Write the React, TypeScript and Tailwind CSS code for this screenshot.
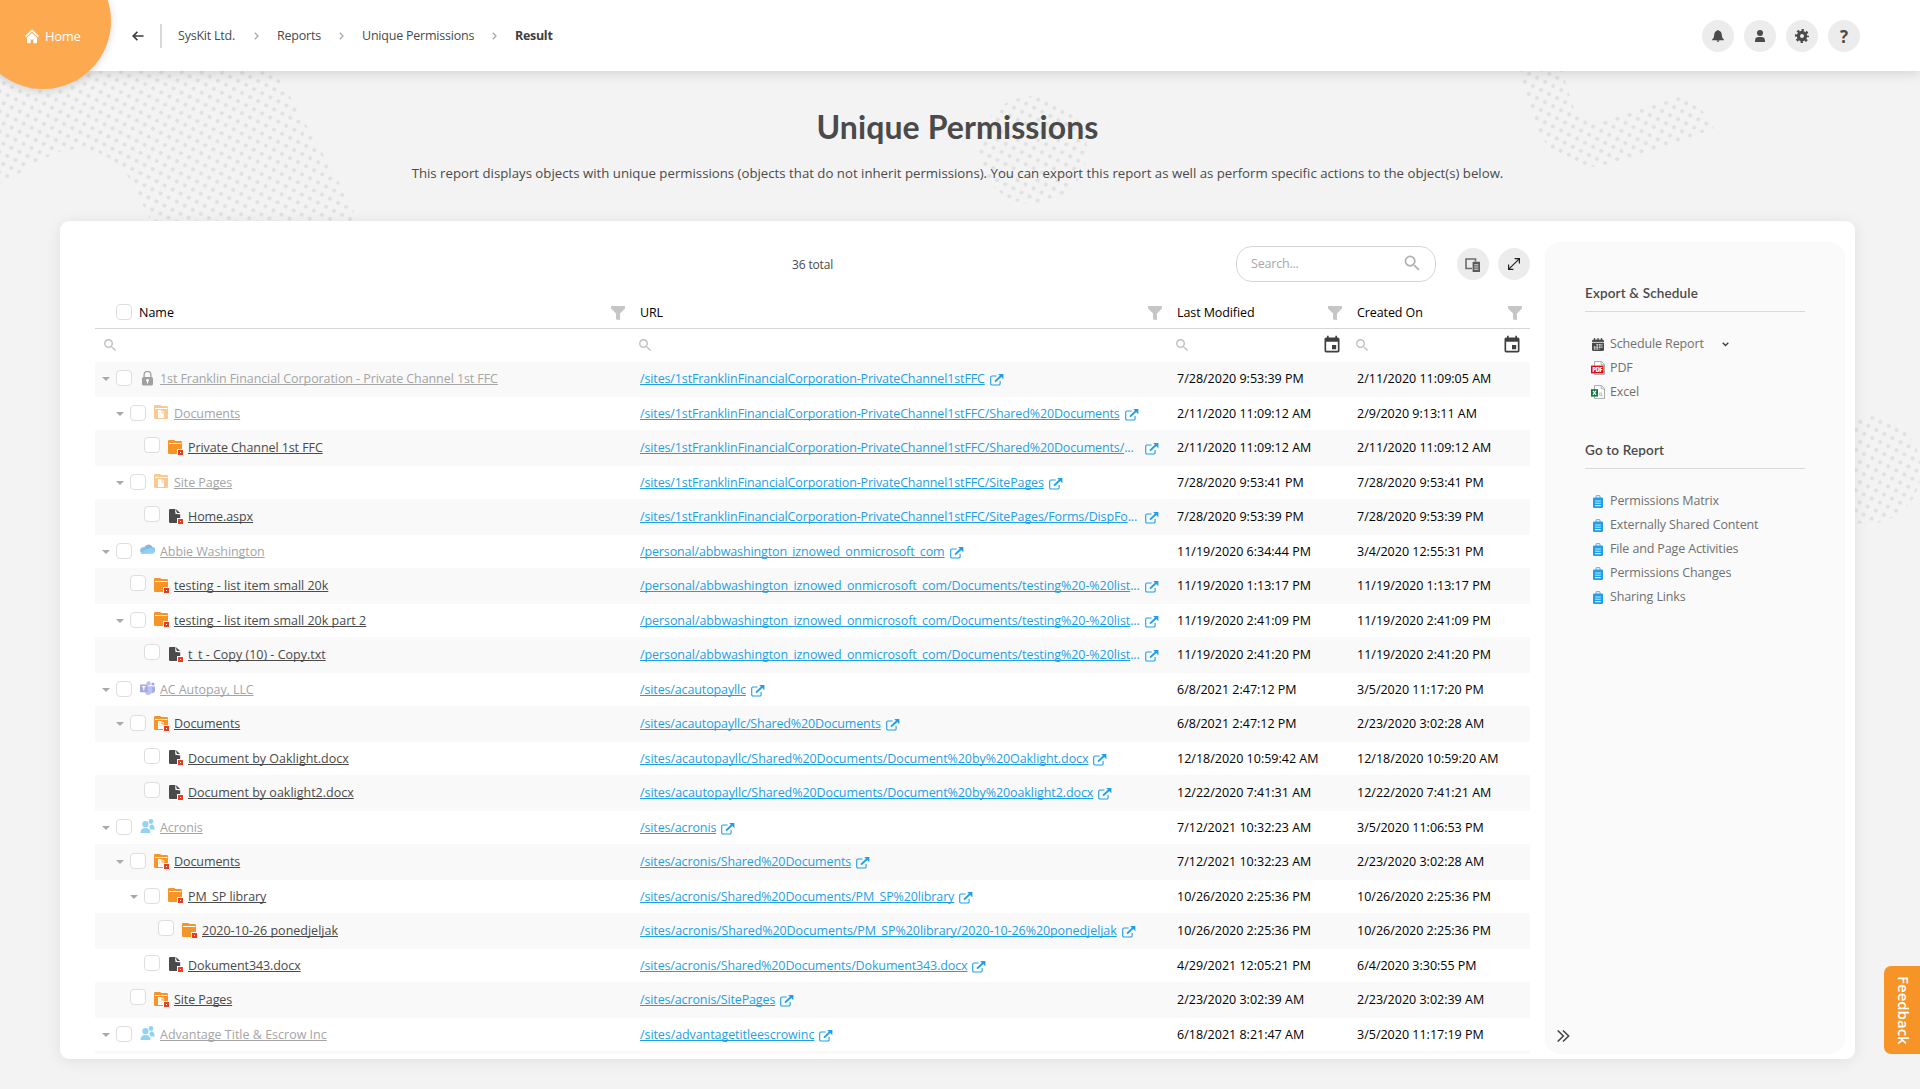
import type { ReactNode } from "react";
import { MdEvent, MdSearch } from "react-icons/md";

type Kind = "lock" | "library" | "folder" | "file" | "cloud" | "teams" | "group";

interface Item {
  level: number;
  kind: Kind;
  name: string;
  open?: boolean;
  faded?: boolean;
  url: string;
  cut?: boolean;
  loose?: boolean;
  modified: string;
  created: string;
}

const FFC = "/sites/1stFranklinFinancialCorporation-PrivateChannel1stFFC";
const ABB = "/personal/abbwashington_iznowed_onmicrosoft_com";

const items: Item[] = [
  { level: 0, kind: "lock", open: true, faded: true, name: "1st Franklin Financial Corporation - Private Channel 1st FFC", url: FFC, modified: "7/28/2020 9:53:39 PM", created: "2/11/2020 11:09:05 AM" },
  { level: 1, kind: "library", open: true, faded: true, name: "Documents", url: FFC + "/Shared%20Documents", modified: "2/11/2020 11:09:12 AM", created: "2/9/2020 9:13:11 AM" },
  { level: 2, kind: "folder", name: "Private Channel 1st FFC", url: FFC + "/Shared%20Documents/", cut: true, modified: "2/11/2020 11:09:12 AM", created: "2/11/2020 11:09:12 AM" },
  { level: 1, kind: "library", open: true, faded: true, name: "Site Pages", url: FFC + "/SitePages", modified: "7/28/2020 9:53:41 PM", created: "7/28/2020 9:53:41 PM" },
  { level: 2, kind: "file", name: "Home.aspx", url: FFC + "/SitePages/Forms/DispFo", cut: true, modified: "7/28/2020 9:53:39 PM", created: "7/28/2020 9:53:39 PM" },
  { level: 0, kind: "cloud", open: true, faded: true, name: "Abbie Washington", url: ABB, modified: "11/19/2020 6:34:44 PM", created: "3/4/2020 12:55:31 PM" },
  { level: 1, kind: "folder", loose: true, name: "testing - list item small 20k", url: ABB + "/Documents/testing%20-%20list", cut: true, modified: "11/19/2020 1:13:17 PM", created: "11/19/2020 1:13:17 PM" },
  { level: 1, kind: "folder", loose: true, open: true, name: "testing - list item small 20k part 2", url: ABB + "/Documents/testing%20-%20list", cut: true, modified: "11/19/2020 2:41:09 PM", created: "11/19/2020 2:41:09 PM" },
  { level: 2, kind: "file", loose: true, name: "t_t - Copy (10) - Copy.txt", url: ABB + "/Documents/testing%20-%20list", cut: true, modified: "11/19/2020 2:41:20 PM", created: "11/19/2020 2:41:20 PM" },
  { level: 0, kind: "teams", open: true, faded: true, name: "AC Autopay, LLC", url: "/sites/acautopayllc", modified: "6/8/2021 2:47:12 PM", created: "3/5/2020 11:17:20 PM" },
  { level: 1, kind: "library", open: true, name: "Documents", url: "/sites/acautopayllc/Shared%20Documents", modified: "6/8/2021 2:47:12 PM", created: "2/23/2020 3:02:28 AM" },
  { level: 2, kind: "file", loose: true, name: "Document by Oaklight.docx", url: "/sites/acautopayllc/Shared%20Documents/Document%20by%20Oaklight.docx", modified: "12/18/2020 10:59:42 AM", created: "12/18/2020 10:59:20 AM" },
  { level: 2, kind: "file", loose: true, name: "Document by oaklight2.docx", url: "/sites/acautopayllc/Shared%20Documents/Document%20by%20oaklight2.docx", modified: "12/22/2020 7:41:31 AM", created: "12/22/2020 7:41:21 AM" },
  { level: 0, kind: "group", open: true, faded: true, name: "Acronis", url: "/sites/acronis", modified: "7/12/2021 10:32:23 AM", created: "3/5/2020 11:06:53 PM" },
  { level: 1, kind: "library", open: true, name: "Documents", url: "/sites/acronis/Shared%20Documents", modified: "7/12/2021 10:32:23 AM", created: "2/23/2020 3:02:28 AM" },
  { level: 2, kind: "folder", open: true, name: "PM_SP library", url: "/sites/acronis/Shared%20Documents/PM_SP%20library", modified: "10/26/2020 2:25:36 PM", created: "10/26/2020 2:25:36 PM" },
  { level: 3, kind: "folder", loose: true, name: "2020-10-26 ponedjeljak", url: "/sites/acronis/Shared%20Documents/PM_SP%20library/2020-10-26%20ponedjeljak", modified: "10/26/2020 2:25:36 PM", created: "10/26/2020 2:25:36 PM" },
  { level: 2, kind: "file", name: "Dokument343.docx", url: "/sites/acronis/Shared%20Documents/Dokument343.docx", modified: "4/29/2021 12:05:21 PM", created: "6/4/2020 3:30:55 PM" },
  { level: 1, kind: "library", name: "Site Pages", url: "/sites/acronis/SitePages", modified: "2/23/2020 3:02:39 AM", created: "2/23/2020 3:02:39 AM" },
  { level: 0, kind: "group", loose: true, open: true, faded: true, name: "Advantage Title & Escrow Inc", url: "/sites/advantagetitleescrowinc", modified: "6/18/2021 8:21:47 AM", created: "3/5/2020 11:17:19 PM" },
];

const indent = ["w-[21px]", "w-[35px]", "w-[49px]", "w-[63px]"];

function Badge() {
  return (
    <>
      <path d="M9 9h6v6H9z" fill="#fff" />
      <path d="M10 10h5v5h-5z" fill="#e63e23" />
      <path d="M12 12h1v1h-1z" fill="#fff" />
    </>
  );
}

function KindIcon({ kind, faded }: { kind: Kind; faded?: boolean }) {
  let body: ReactNode = null;
  if (kind === "lock")
    body = (
      <>
        <path d="M4.1 7V3.8a3.4 3.4 0 0 1 6.8 0V7" fill="none" stroke="#4a4a4a" strokeWidth="1.3" />
        <rect x="2" y="6" width="11" height="8.6" rx="1.6" fill="#4a4a4a" />
        <circle cx="7.5" cy="9.3" r="1.4" fill="#fff" />
        <path d="M6.9 9.5h1.2v3H6.9z" fill="#fff" />
      </>
    );
  if (kind === "folder" || kind === "library")
    body = (
      <>
        <path d="M0 1.2Q0 0 1.2 0H6l1.6 1h5.2q1.2 0 1.2 1.2v10.6q0 1.2-1.2 1.2H1.2Q0 14 0 12.8z" fill="#f79428" />
        <path d="M1 3.5h12.4" stroke="#fff" strokeWidth="1" />
        {kind === "library" && (
          <>
            <path d="M4 5h3.6v3.4H10V13H4z" fill="#fff" />
            <path d="M8.4 5.2l2.1 2.3H8.4z" fill="#fff" />
            <path d="M5.4 6.4v3.4h2.4" fill="none" stroke="#f79428" strokeWidth="0.6" opacity="0.4" />
          </>
        )}
        {!faded && <Badge />}
      </>
    );
  if (kind === "file")
    body = (
      <>
        <path d="M1 1.2Q1 0 2.2 0h5.2v5h4.8v7.8q0 1.2-1.2 1.2H2.2Q1 14 1 12.8z" fill="#4a4a4a" />
        <path d="M8.2 0.2l3.9 3.9H8.2z" fill="#4a4a4a" />
        <path d="M7.4 1.9l1.7 2.6 2.6.6" fill="none" stroke="#fff" strokeWidth="0.8" />
        <Badge />
      </>
    );
  if (kind === "cloud")
    body = (
      <>
        <path d="M4 5a4.6 4.6 0 0 1 8.4-1.1A3.4 3.4 0 0 1 15 8.6L6 8z" fill="#1270c4" />
        <path d="M3.4 4.2a3.6 3.6 0 0 1 3 .9l5.4 4.3-8.2 1.4A3.3 3.3 0 0 1 3.4 4.2z" fill="#1380d0" />
        <path d="M.6 9.6 10 5q4.9-.6 4.9 3 0 2.8-2.8 2.8H2.7q-1.6 0-2.1-1.2z" fill="#28a0ea" />
      </>
    );
  if (kind === "teams")
    body = (
      <>
        <circle cx="8.6" cy="2.4" r="2.2" fill="#7b83eb" />
        <circle cx="13" cy="3" r="1.6" fill="#5059c9" />
        <path d="M11 5.4h4v4.4a2.6 2.6 0 0 1-4 1.8z" fill="#5059c9" />
        <path d="M5.4 5.2h6.8v5a4 4 0 0 1-6.8 2.6z" fill="#7b83eb" />
        <rect x="0" y="3.4" width="7.6" height="7.8" rx="0.7" fill="#4b53bc" />
        <path d="M1.9 5.6h3.8M3.8 5.6v4" stroke="#fff" strokeWidth="1.2" />
      </>
    );
  if (kind === "group")
    body = (
      <g fill="#28a8ea">
        <circle cx="5.4" cy="5.2" r="3.1" />
        <path d="M0.5 14q0-5 5-5t5 5z" />
        <circle cx="11" cy="2.5" r="2.4" />
        <path d="M9.2 7.2q.9-1.6 2.4-1.6 3 0 3 4.8h-4.4q0-2-1-3.2z" />
      </g>
    );
  return (
    <svg width="15" height="15" viewBox="0 0 15 15" className={faded ? "opacity-50" : ""}>
      {body}
    </svg>
  );
}

function Funnel() {
  return (
    <svg width="14" height="14" viewBox="0 0 14 14" className="shrink-0 translate-y-px">
      <path d="M0 0h14v2.4L9 7.4V14L5 13.4v-6L0 2.4z" fill="#c6c6c6" />
    </svg>
  );
}

function LinkOut() {
  return (
    <svg width="14" height="12" viewBox="0 0 14 12" className="shrink-0">
      <path d="M6.6 2H2Q.7 2 .7 3.3v6.4q0 1.3 1.3 1.3h6.8q1.3 0 1.3-1.3V7" fill="none" stroke="#1f9fe8" strokeWidth="1.1" />
      <path d="M5 7.6 11.2 1.8" stroke="#1f9fe8" strokeWidth="1.9" />
      <path d="M8.2 0h5.2v5.2z" fill="#1f9fe8" />
    </svg>
  );
}

function Check() {
  return <span className="block size-4 shrink-0 rounded-[4px] border border-[#dedede] bg-white" />;
}

function Row({ item, index }: { item: Item; index: number }) {
  const odd = index % 2 === 0;
  const height = index === 0 ? "h-[35px]" : odd ? "h-9 pt-px" : "h-[33px]";
  const iconPad = index === 0 ? "pt-[9px]" : odd ? "pt-[9px]" : "pt-2";
  return (
    <div className={`flex shrink-0 items-start ${height} ${odd ? "bg-[#f9f9f9]" : "bg-white"}`}>
      <div className="flex w-[545px] items-start">
        <span className={`flex shrink-0 justify-end pt-[15px] pr-[6px] ${indent[item.level]}`}>
          {item.open && (
            <svg width="8" height="4" viewBox="0 0 8 4">
              <path d="M0 0h8L4 4z" fill="#a9a9a9" />
            </svg>
          )}
        </span>
        <span className={item.open ? "pt-2" : "pt-1.5"}>
          <Check />
        </span>
        <span className={`ml-2 shrink-0 ${iconPad}`}>
          <KindIcon kind={item.kind} faded={item.faded} />
        </span>
        <span
          className={`ml-[5px] pt-[7px] leading-5 whitespace-nowrap underline decoration-1 underline-offset-1 [text-decoration-skip-ink:none] ${item.loose ? "tracking-normal" : "tracking-[-0.08px]"} ${item.faded ? "text-[#a5a5a5]" : "text-[#4a4a4a]"}`}
        >
          {item.name}
        </span>
      </div>
      <div className={`flex w-[519px] items-start text-[#1f9fe8] ${item.cut ? "justify-between" : ""}`}>
        <span className={`pt-[7px] leading-5 whitespace-nowrap ${item.loose ? "tracking-[-0.08px]" : "tracking-[-0.13px]"}`}>
          <span className="underline decoration-1 underline-offset-1 [text-decoration-skip-ink:none]">{item.url}</span>
          {item.cut && "..."}
        </span>
        <span className="ml-[5px] pt-3">
          <LinkOut />
        </span>
      </div>
      <span className="ml-[18px] w-[180px] pt-[7px] leading-5 whitespace-nowrap text-black">{item.modified}</span>
      <span className="pt-[7px] leading-5 whitespace-nowrap text-black">{item.created}</span>
    </div>
  );
}

function Crumb({ children }: { children: ReactNode }) {
  return <span className="pt-px tracking-[-0.22px] whitespace-nowrap text-[#4a4a4a]">{children}</span>;
}

function CrumbArrow() {
  return (
    <svg width="5" height="8" viewBox="0 0 5 8" className="shrink-0">
      <path d="M.8.8 4 4 .8 7.2" fill="none" stroke="#a8a8a8" strokeWidth="1.3" />
    </svg>
  );
}

function RoundButton({ children }: { children: ReactNode }) {
  return <button className="flex size-8 items-center justify-center rounded-full bg-[#ececec]">{children}</button>;
}

function DotPattern({ id, x, y }: { id: string; x: number; y: number }) {
  return (
    <pattern id={id} patternUnits="userSpaceOnUse" x="-4.515" y="-4.515" width="9.03" height="9.03" patternTransform={`translate(${x} ${y}) rotate(27)`}>
      <circle cx="4.515" cy="4.515" r="2.1" fill="#e1e1e1" />
    </pattern>
  );
}

function Backdrop() {
  return (
    <svg width="1920" height="1089" viewBox="0 0 1920 1089" className="absolute inset-0">
      <defs>
        <DotPattern id="dotsLeft" x={193.3} y={129} />
        <DotPattern id="dotsTop" x={1529} y={73.7} />
        <DotPattern id="dotsTitle" x={1038.3} y={99.7} />
        <DotPattern id="dotsRight" x={1860.3} y={421.7} />
      </defs>
      <path fill="url(#dotsLeft)" d="M0 60H265Q280 78 292 100L318 145L335 175Q352 203 358 224H152Q148 214 140 200Q133 180 122 170Q108 154 92 151Q75 147 58 152Q38 161 20 173L0 184Z" />
      <path fill="url(#dotsTop)" d="M1516 68L1524 90L1532 115Q1540 143 1562 159Q1580 166 1594 167Q1640 158 1675 143L1705 132Q1716 131 1713 125Q1706 108 1678 97L1640 109L1597 121Q1582 118 1574 108Q1568 92 1562 68Z" />
      <circle cx="1033" cy="150" r="54" fill="url(#dotsTitle)" />
      <circle cx="1867" cy="470" r="54" fill="url(#dotsRight)" />
    </svg>
  );
}

function PanelHeading({ children }: { children: ReactNode }) {
  return <h2 className="h-[36px] border-b border-[#d9d9d9] pt-[7px] font-['Lato'] text-[13.5px] leading-5 font-semibold tracking-[0.15px] text-[#4a4a4a]">{children}</h2>;
}

function PanelItem({ icon, children }: { icon: ReactNode; children: ReactNode }) {
  return (
    <li className="flex h-6 items-center pl-[6px]">
      <span className="mr-[5px] flex w-[14px] justify-center">{icon}</span>
      <span className="pt-px tracking-[-0.13px] text-[#707070]">{children}</span>
    </li>
  );
}

function ReportIcon() {
  return (
    <svg width="10" height="13" viewBox="0 0 10 13">
      <path d="M3 2.8V1.6q0-1 1-1h2q1 0 1 1v1.2" fill="none" stroke="#63bdf3" strokeWidth="1.1" />
      <rect x="0" y="2.6" width="10" height="10.4" rx="1" fill="#1f9fe8" />
      <path d="M2.2 6h5.6M2.2 8.3h5.6M2.2 10.6h5.6" stroke="#c9e8fb" strokeWidth="1.1" />
    </svg>
  );
}

function ScheduleIcon() {
  return (
    <svg width="12" height="13" viewBox="0 0 12 13">
      <path d="M2.5 0v3M6 0v3M9.5 0v3" stroke="#4a4a4a" strokeWidth="1.2" />
      <rect x="0" y="1.6" width="12" height="11.4" rx="1.5" fill="#4a4a4a" />
      <path d="M0 4.4h12" stroke="#fafafa" strokeWidth="0.8" />
      <path d="M4.4 6.8h6M1.8 9.2h8.6M1.8 11h5.6" stroke="#fafafa" strokeWidth="1.2" strokeDasharray="1.8 0.7" />
    </svg>
  );
}

function PageIcon({ color, children }: { color: string; children: ReactNode }) {
  return (
    <svg width="14" height="14" viewBox="0 0 14 14">
      <path d="M3.5.6h7l3 3v9.8h-10z" fill="#fff" stroke="#a9a9a9" strokeWidth="1" />
      <path d="M10.2.6v3.2h3.2" fill="none" stroke="#a9a9a9" strokeWidth="0.9" />
      <g fill={color}>{children}</g>
    </svg>
  );
}

export default function App() {
  return (
    <div className="relative h-[1089px] w-[1920px] overflow-hidden bg-[#f3f3f3] font-['Open_Sans',sans-serif] text-[12.5px] text-[#4a4a4a]">
      <Backdrop />

      <header className="relative flex h-[71px] items-start bg-white shadow-[0_2px_12px_rgba(0,0,0,0.14)]">
        <div className="absolute -top-[47px] -left-[25px] size-[136px] rounded-full bg-[#fda94f] shadow-[0_2px_8px_rgba(0,0,0,0.14)]" />
        <div className="relative flex h-[72px] w-[132px] items-center pl-[25px] text-white">
          <svg width="14" height="15" viewBox="0 0 14 15">
            <path d="M.6 7.6 7 1.4l6.4 6.2" fill="none" stroke="#fff" strokeWidth="1.7" />
            <path d="M2 8.6 7 3.9l5 4.7v4.6q0 1-1 1H8.4v-3.6H5.6v3.6H3q-1 0-1-1z" fill="#fff" />
          </svg>
          <span className="ml-1.5 pt-px text-[13px] tracking-[-0.35px]">Home</span>
        </div>
        <nav className="relative flex h-[71px] items-center">
          <svg width="12" height="10" viewBox="0 0 12 10">
            <path d="M11.6 5H1.6M5.4.9 1.2 5l4.2 4.1" fill="none" stroke="#3f3f3f" strokeWidth="1.7" />
          </svg>
          <span className="mr-4 ml-4 h-6 w-[2px] bg-[#d8d8d8]" />
          <span className="flex w-[99px] items-center justify-between pr-[18px]">
            <Crumb>SysKit Ltd.</Crumb>
            <CrumbArrow />
          </span>
          <span className="flex w-[85px] items-center justify-between pr-[18px]">
            <Crumb>Reports</Crumb>
            <CrumbArrow />
          </span>
          <span className="flex w-[153px] items-center justify-between pr-[18px]">
            <Crumb>Unique Permissions</Crumb>
            <CrumbArrow />
          </span>
          <span className="pt-0.5 font-bold tracking-[-0.3px] text-[#3f3f3f]">Result</span>
        </nav>
        <div className="relative ml-auto flex gap-[10px] pt-5 pr-[60px]">
          <RoundButton>
            <svg width="12" height="12" viewBox="0 0 12 12">
              <path d="M6 0q.9 0 .9.8Q9.8 1.6 9.8 5q0 3 2 4.2v1H.2v-1Q2.2 8 2.2 5q0-3.4 2.9-4.2Q5.1 0 6 0zM4.6 10.6h2.8Q7.2 12 6 12t-1.4-1.4z" fill="#4a4a4a" />
            </svg>
          </RoundButton>
          <RoundButton>
            <svg width="10" height="12" viewBox="0 0 10 12">
              <circle cx="5" cy="3.1" r="3" fill="#4a4a4a" />
              <path d="M0 12v-1.2Q0 7.2 3.4 7h3.2Q10 7.2 10 10.8V12z" fill="#4a4a4a" />
            </svg>
          </RoundButton>
          <RoundButton>
            <svg width="14" height="14" viewBox="-7 -7 14 14">
              <circle r="3.6" fill="none" stroke="#4a4a4a" strokeWidth="3.2" />
              <circle r="5.9" fill="none" stroke="#4a4a4a" strokeWidth="2.2" strokeDasharray="2.35 2.284" strokeDashoffset="1.17" />
            </svg>
          </RoundButton>
          <RoundButton>
            <span className="text-[17px] leading-none font-bold text-[#4a4a4a]">?</span>
          </RoundButton>
        </div>
      </header>

      <section className="relative flex h-[150px] w-[1915px] flex-col items-center">
        <h1 className="mt-9 font-['Lato'] text-[32px] leading-10 font-bold tracking-[0.1px] text-[#4a4a4a]">Unique Permissions</h1>
        <p className="mt-4 text-[13.23px] leading-5 whitespace-nowrap">
          This report displays objects with unique permissions (objects that do not inherit permissions). You can export this report as well as perform specific actions to the object(s) below.
        </p>
      </section>

      <main className="relative ml-[60px] flex h-[838px] w-[1795px] rounded-[9px] bg-white shadow-[0_2px_16px_rgba(0,0,0,0.08)]">
        <section className="ml-[35px] flex h-[833px] w-[1435px] flex-col overflow-hidden">
          <div className="flex h-[75px] shrink-0 items-start pt-[25px]">
            <span className="w-[1141px] pt-[9px] pl-[697px] text-[12px] leading-5 tracking-[-0.15px]">36 total</span>
            <div className="flex h-9 w-[200px] items-center justify-between rounded-[16px] border border-[#d6d6d6] pr-[13px] pl-[14px]">
              <span className="pt-px tracking-[-0.2px] text-[#a8a8a8]">Search...</span>
              <MdSearch className="-mt-0.5 text-[20.5px] text-[#b0b0b0]" />
            </div>
            <div className="mt-0.5 ml-[21px] flex gap-[9px]">
              <RoundButton>
                <svg width="15" height="14" viewBox="0 0 15 14" className="-ml-px translate-y-px">
                  <path d="M7 10.5H1V1h9.5v2.5" fill="none" stroke="#6b6b6b" strokeWidth="1.6" />
                  <rect x="7.6" y="3.8" width="7.4" height="10.2" rx="0.6" fill="#5a5a5a" />
                  <path d="M9.2 6.8h4.2M9.2 9h4.2M9.2 11.2h4.2" stroke="#ececec" strokeWidth="0.9" />
                </svg>
              </RoundButton>
              <RoundButton>
                <svg width="12" height="12" viewBox="0 0 12 12" fill="none" stroke="#222" strokeWidth="1.2">
                  <path d="M.8 11.2 11.2.8M6.6.6h4.8v4.8M.6 6.6v4.8h4.8" />
                </svg>
              </RoundButton>
            </div>
          </div>

          <div className="flex h-[33px] shrink-0 items-center border-b border-[#d6d6d6] pr-2 text-black">
            <span className="flex w-[516px] items-center pl-[21px]">
              <Check />
              <span className="ml-[7px] pt-0.5">Name</span>
            </span>
            <Funnel />
            <span className="ml-[15px] w-[508px] pt-0.5 tracking-[-0.2px]">URL</span>
            <Funnel />
            <span className="ml-[15px] w-[151px] pt-0.5 tracking-[-0.1px]">Last Modified</span>
            <Funnel />
            <span className="ml-[15px] w-[151px] pt-0.5 tracking-[-0.1px]">Created On</span>
            <Funnel />
          </div>

          <div className="flex h-[33px] shrink-0 items-center pb-px pl-[7px] text-[#c0c0c0]">
            <MdSearch className="text-[16.5px]" />
            <MdSearch className="ml-[518.5px] text-[16.5px]" />
            <MdSearch className="ml-[520.5px] text-[16.5px]" />
            <MdEvent className="ml-[131px] text-[20px] text-[#3f3f3f]" />
            <MdSearch className="ml-[12.5px] text-[16.5px]" />
            <MdEvent className="ml-[131px] text-[20px] text-[#3f3f3f]" />
          </div>

          {items.map((item, i) => (
            <Row key={i} item={item} index={i} />
          ))}
          <div className="h-9 shrink-0 bg-[#f9f9f9]" />
        </section>

        <aside className="mt-[21px] ml-[15px] flex h-[812px] w-[300px] flex-col rounded-[15px] bg-[#fafafa] px-10 pt-[34px]">
          <PanelHeading>Export &amp; Schedule</PanelHeading>
          <ul className="mt-5">
            <PanelItem icon={<ScheduleIcon />}>
              <span className="flex items-center gap-[18px]">
                Schedule Report
                <svg width="7" height="5" viewBox="0 0 7 5">
                  <path d="M.7.7 3.5 3.5 6.3.7" fill="none" stroke="#3f3f3f" strokeWidth="1.4" />
                </svg>
              </span>
            </PanelItem>
            <PanelItem
              icon={
                <PageIcon color="#e30613">
                  <rect x="0" y="4.6" width="12.6" height="7.8" />
                  <text x="1.2" y="10.8" fill="#fff" fontSize="6" fontWeight="800" textLength="10.2">PDF</text>
                </PageIcon>
              }
            >
              PDF
            </PanelItem>
            <PanelItem
              icon={
                <PageIcon color="#10793f">
                  <rect x="0" y="4.2" width="7" height="7.4" />
                  <path d="M2 5.9l3 4M5 5.9l-3 4" stroke="#fff" strokeWidth="1.2" />
                  <path d="M8.6 8h2v2.4h-2zM11 10v1.6" fill="none" stroke="#8fc7a6" strokeWidth="0.8" />
                </PageIcon>
              }
            >
              Excel
            </PanelItem>
          </ul>
          <div className="mt-[29px]">
            <PanelHeading>Go to Report</PanelHeading>
          </div>
          <ul className="mt-5">
            {["Permissions Matrix", "Externally Shared Content", "File and Page Activities", "Permissions Changes", "Sharing Links"].map((label) => (
              <PanelItem key={label} icon={<ReportIcon />}>
                {label}
              </PanelItem>
            ))}
          </ul>
          <svg width="13" height="12" viewBox="0 0 13 12" className="mt-auto mb-3 -ml-7">
            <path d="M.7.5 6.3 6 .7 11.5M6 .5 11.6 6 6 11.5" fill="none" stroke="#4a4a4a" strokeWidth="1.6" />
          </svg>
        </aside>
      </main>

      <button className="absolute top-[966px] right-0 flex h-[88px] w-9 items-center justify-center rounded-l-[7px] bg-[#f79428] pl-0.5">
        <span className="text-[15px] leading-none font-semibold text-white [writing-mode:vertical-rl]">Feedback</span>
      </button>
    </div>
  );
}
